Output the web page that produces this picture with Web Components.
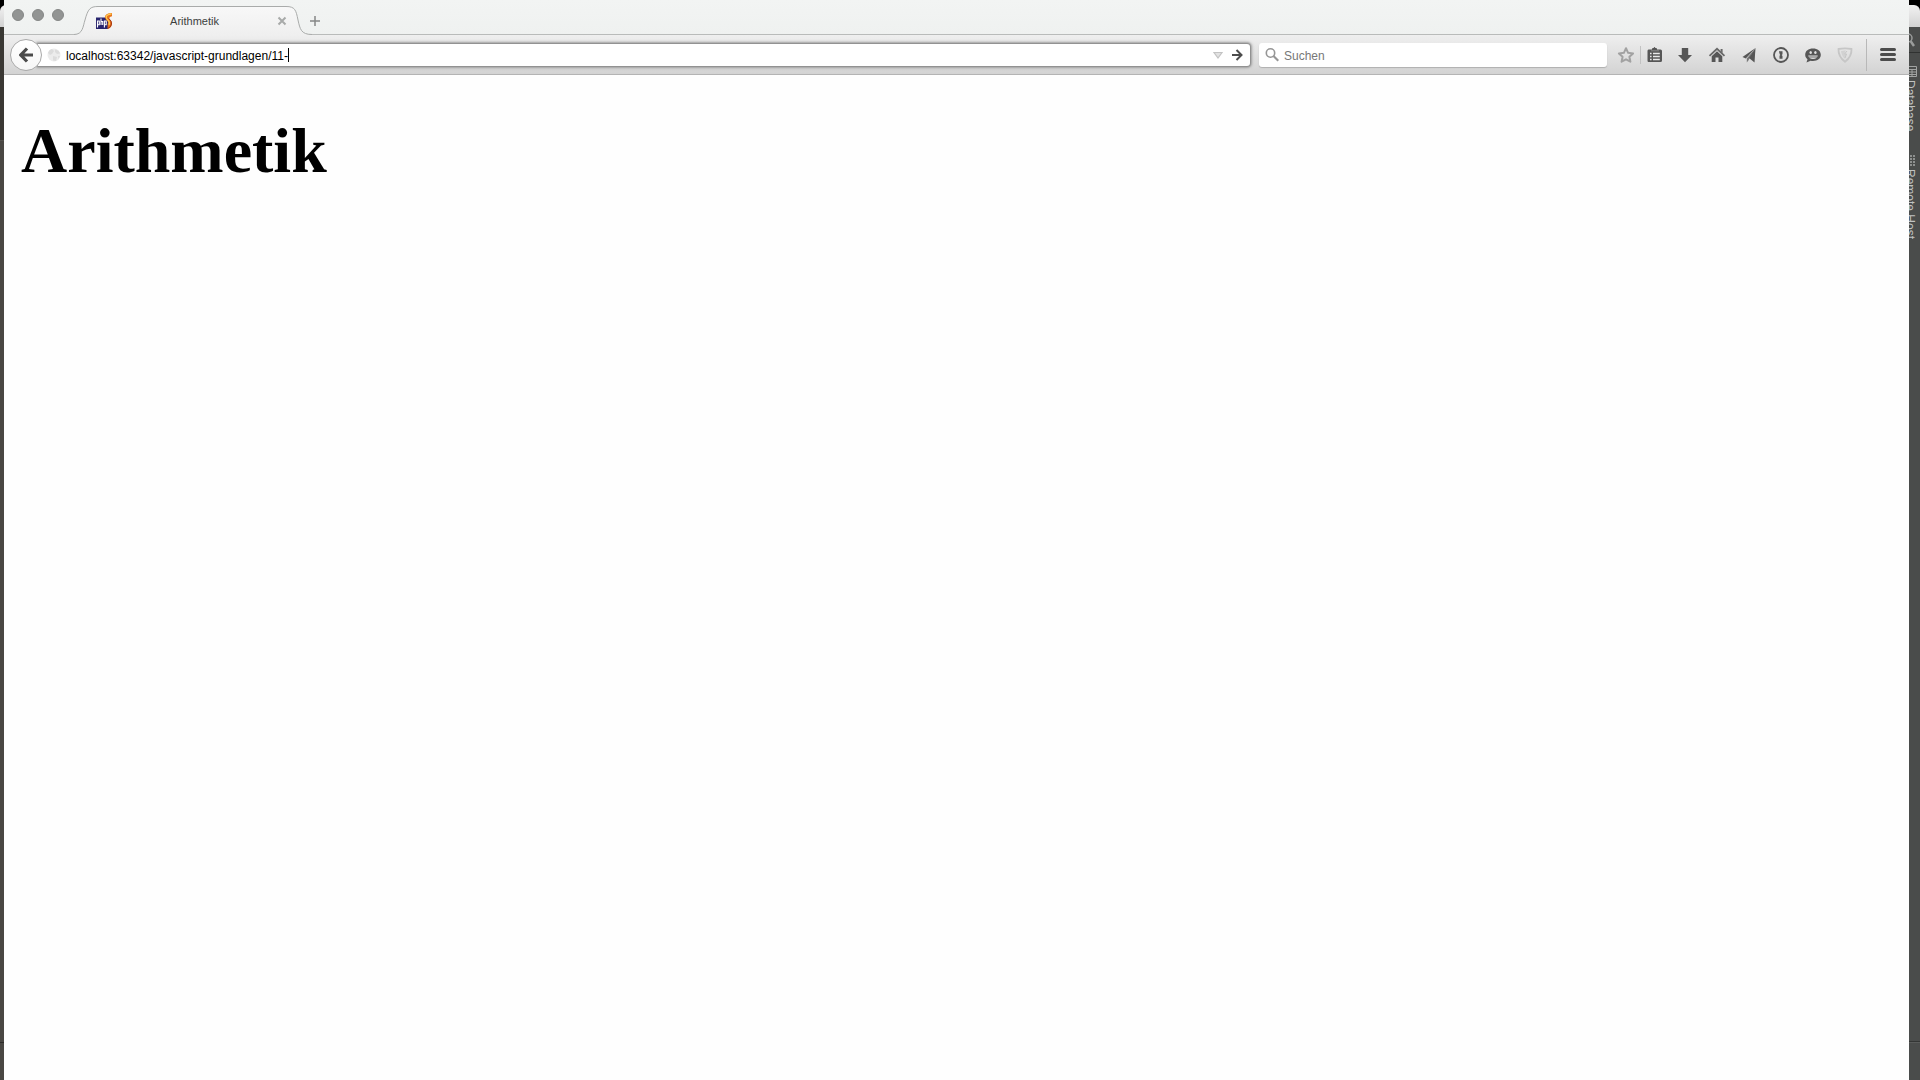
<!DOCTYPE html>
<html lang="de">
<head>
<meta charset="utf-8">
<title>Arithmetik</title>
<style>
  html, body { margin: 0; }
  body { font-family: "Liberation Sans", Arial, sans-serif; font-size: 12px; background: #000; }
</style>
</head>
<body>
<desk-top>
  <ide-backdrop slot="behind">
    <tool-window-tab icon="database">Database</tool-window-tab>
    <tool-window-tab icon="remote">Remote Host</tool-window-tab>
  </ide-backdrop>
  <browser-window>
    <tab-strip slot="tabs">
      <browser-tab>Arithmetik</browser-tab>
    </tab-strip>
    <nav-toolbar slot="toolbar">
      <url-bar value="localhost:63342/javascript-grundlagen/11-"></url-bar>
      <search-bar placeholder="Suchen"></search-bar>
      <tool-button slot="star" icon="star" label="Lesezeichen"></tool-button>
      <tool-button slot="list" icon="clipboard" label="Lesezeichenliste"></tool-button>
      <tool-button slot="tools" icon="download" label="Downloads"></tool-button>
      <tool-button slot="tools" icon="home" label="Startseite"></tool-button>
      <tool-button slot="tools" icon="plane" label="Seite teilen"></tool-button>
      <tool-button slot="tools" icon="one" label="Passwörter"></tool-button>
      <tool-button slot="tools" icon="smile" label="Chat"></tool-button>
      <tool-button slot="tools" icon="shield" label="Schutz"></tool-button>
      <tool-button slot="menu" icon="menu" label="Menü"></tool-button>
    </nav-toolbar>
    <page-view><span>Arithmetik</span></page-view>
  </browser-window>
</desk-top>

<script>
const ICONS = {
  star: '<path d="M10 3.200l2.100 4.600 5 .6-3.700 3.400 1 4.900L10 14.300l-4.400 2.400 1-4.900-3.700-3.400 5-.6z" fill="none" stroke="#a2a2a2" stroke-width="2" stroke-linejoin="round"/>',
  clipboard: '<path d="M3.500 4.500H7V4q0-1 1-1h.6q.9-2 1.800 0h.6q1 0 1 1v.5h3.500Q17 4.500 17 6v9.500q0 1.500-1.500 1.500h-12Q2.500 17 2.500 15.500V6Q2.500 4.500 3.500 4.500z" fill="#565656"/><path d="M5 8.500h1.600M8 8.500h6.800M5 11.500h1.600M8 11.500h6.800M5 14.500h1.600M8 14.500h6.800" stroke="#e9e9e9" stroke-width="1.600"/><path d="M6 5.800h8" stroke="#888"/>',
  download: '<path d="M6.800 3h6.400v7h3.800L10 17.300 3 10h3.800z" fill="#565656"/>',
  home: '<path d="M2.500 10.800L10 3.800l7.500 7" fill="none" stroke="#686868" stroke-width="1.800"/><path d="M13.600 4h2v4l-2-1.800z" fill="#686868"/><path d="M4.700 11.200L10 6.300l5.300 4.900V17H11.500v-4.500h-3V17H4.700z" fill="#565656"/>',
  plane: '<path d="M16.500 3L3.500 12l3.300 1.600z" fill="#565656"/><path d="M16.500 3L7.800 13.500V17.500l1.700-2.300z" fill="#777"/><path d="M16.500 3L10 13l5.500 4.500z" fill="#565656"/>',
  one: '<circle cx="10" cy="10" r="7" fill="none" stroke="#565656" stroke-width="1.800"/><path d="M8 6.200h3.500v3l-.8.800.8.900v2.900H8.500v-3l.8-.8-.8-.9V7.500H8z" fill="#565656"/>',
  smile: '<path d="M10 3.500c4.500 0 7.800 2.400 7.800 6.300S14.500 16 10 16c-.8 0-1.600-.1-2.400-.3L3.500 17.500l1-3.200C3 13.200 2.200 11.800 2.200 9.800 2.200 5.900 5.500 3.500 10 3.500z" fill="#565656"/><ellipse cx="7.700" cy="7.500" rx="1.200" ry="1.500" fill="#dedede"/><ellipse cx="12.400" cy="7.500" rx="1.200" ry="1.500" fill="#dedede"/><path d="M5.200 10.500h9.600q-1 3.600-4.800 3.600t-4.800-3.600z" fill="#dedede"/><path d="M6 12h8" stroke="#565656" stroke-width=".8"/>',
  shield: '<path d="M3.500 4Q10 2.600 16.500 4q.4 7.500-6.500 12.800Q3.100 11.500 3.500 4z" fill="none" stroke="#c6c6c6" stroke-width="1.800"/><path d="M6 6q3-.8 5-.5L9 9l2 .3-1 4.500Q6.500 11 6 6z" fill="#d2d2d2"/><path d="M12 6l-2.500 3h2L10 13" fill="none" stroke="#c6c6c6"/>',
  menu: '<path d="M3.500 4.500h13M3.500 9.500h13M3.500 14.500h13" stroke="#4c4c4c" stroke-width="3" stroke-linecap="round"/>'
};

function define(name, html, setup) {
  const template = document.createElement('template');
  template.innerHTML = html;
  customElements.define(name, class extends HTMLElement {
    constructor() {
      super();
      this.attachShadow({ mode: 'open' }).append(template.content.cloneNode(true));
    }
    connectedCallback() { if (setup) setup(this, this.shadowRoot); }
  });
}

define('desk-top', `
  <style>
    :host { display: flex; min-height: 100vh; position: relative; isolation: isolate; }
    ::slotted(browser-window) { flex: 1; margin: 0 11px 0 4px; }
  </style>
  <slot name="behind"></slot><slot></slot>`);

/* Editor window that peeks out on both sides of the browser. */
define('ide-backdrop', `
  <style>
    :host { position: absolute; inset: 0; z-index: -1; display: flex; flex-direction: column; padding-top: 5px; box-sizing: border-box; }
    .title { height: 22px; border-radius: 6px 6px 0 0; background: linear-gradient(#f2f2f2, #d2d2d2); }
    .main { flex: 1; display: flex; justify-content: space-between; }
    .left { width: 4px; display: flex; flex-direction: column; background: #494743; }
    .left i { height: 113px; border-bottom: 1px solid #55534f; background: #3a3834; }
    .left b { margin-top: auto; height: 37px; border-top: 1px solid #2c2b29; }
    .right { width: 20px; display: flex; flex-direction: column; align-items: center; background: #4a4c4b; color: #c0c2c1; }
    .find { align-self: stretch; height: 26px; border-bottom: 1px solid #303231; display: flex; justify-content: flex-end; align-items: center; padding-right: 5px; box-sizing: border-box; }
    .tabs { display: flex; flex-direction: column; gap: 23px; padding: 12px 0; }
    .status { align-self: stretch; margin-top: auto; height: 38px; border-top: 1px solid #343635; box-shadow: inset 0 1px #5a5c5b; }
  </style>
  <div class="title"></div>
  <div class="main">
    <div class="left"><i></i><b></b></div>
    <div class="right">
      <div class="find"><svg width="14" height="14" viewBox="0 0 14 14" fill="none" stroke="#9a9c9b"><circle cx="7" cy="5" r="4" stroke-width="1.500"/><path d="M9.500 8l3.500 5" stroke-width="2.500"/></svg></div>
      <div class="tabs"><slot></slot></div>
      <div class="status"></div>
    </div>
  </div>`);

define('tool-window-tab', `
  <style>
    :host { display: flex; flex-direction: column; align-items: center; gap: 2px; }
    span { writing-mode: vertical-rl; line-height: 14px; white-space: nowrap; }
    svg { display: block; }
  </style>
  <svg width="14" height="13" viewBox="2 0 14 13"></svg>
  <span><slot></slot></span>`, (el, root) => {
  root.querySelector('svg').innerHTML = el.getAttribute('icon') === 'database'
    ? '<path d="M2.500 1.500h13v10h-13zM2.500 4.500h13M2.500 7h13M2.500 9.500h13M7 4v8M11 4v8" fill="none" stroke="#a2a4a3"/>'
    : '<path d="M3 2h11M3 5h11M3 8h11M3 11h11" stroke="#8e908f" stroke-width="2" stroke-dasharray="2 1"/>';
});

define('browser-window', `
  <style>
    :host { display: flex; flex-direction: column; min-width: 0; background: #fff; }
    ::slotted(page-view) { flex: 1; }
  </style>
  <slot name="tabs"></slot><slot name="toolbar"></slot><slot></slot>`);

define('tab-strip', `
  <style>
    :host { display: flex; height: 35px; box-sizing: border-box; background: linear-gradient(#f2f4f3, #eff1f0); box-shadow: inset 0 -1px #b9bbba; }
    .lights { display: flex; gap: 8px; padding: 9px 0 0 8px; width: 62px; }
    .lights button { width: 12px; height: 12px; padding: 0; border: 1px solid #858786; border-radius: 50%; background: #929493; }
    .add { align-self: center; margin: 7px 0 0 -7px; width: 20px; height: 20px; padding: 0; border: 0; background: none; display: flex; align-items: center; justify-content: center; }
  </style>
  <div class="lights"><button aria-label="Schließen"></button><button aria-label="Minimieren"></button><button aria-label="Maximieren"></button></div>
  <slot></slot>
  <button class="add" aria-label="Neuer Tab"><svg width="12" height="12" viewBox="0 0 12 12"><path d="M6 1v10M1 6h10" stroke="#858786" stroke-width="1.500"/></svg></button>`);

define('browser-tab', `
  <style>
    :host { position: relative; display: flex; align-items: center; width: 238px; height: 29px; margin-top: 6px; padding: 0 25px 0 22px; box-sizing: border-box; font-size: 11px; color: #3c3e3d; isolation: isolate; }
    .shape { position: absolute; inset: 0; z-index: -1; }
    span { flex: 1; text-align: center; line-height: 16px; }
    button { padding: 0; border: 0; background: none; width: 10px; height: 10px; display: flex; }
  </style>
  <svg class="shape" width="238" height="29" viewBox="0 0 238 29">
    <defs><linearGradient id="g" x2="0" y2="1"><stop stop-color="#f8f8f8"/><stop offset="1" stop-color="#efefef"/></linearGradient></defs>
    <path d="M0 29V28.500C9 28.500 9 20 11 14 14 3 16 .5 24 .5H212C221 .5 222 4 224 14 226 23 227 28.500 238 28.500V29z" fill="url(#g)"/>
    <path d="M0 28.500C9 28.500 9 20 11 14 14 3 16 .5 24 .5H212C221 .5 222 4 224 14 226 23 227 28.500 238 28.500" fill="none" stroke="#a9abaa"/>
  </svg>
  <svg width="16" height="16" viewBox="0 0 16 16">
    <path d="M0 4.500h12V16H0z" fill="#28246e"/>
    <path d="M1.500 14.500V8h1.800v3.800H1.500M5 5.500v6.500M5 8.500h1.700V12M8.400 14.500V8h1.800v3.800H8.400" fill="none" stroke="#fff" stroke-width="1.100"/>
    <path d="M16 .1Q8.800.3 9 4.300q0 2 2.400 3.800 1.300 1.300.2 3V16q4.400-1.200 4.400-5.600 0-1.900-2.300-4Q12.300 4.200 16 3.200z" fill="#e8741c"/>
    <path d="M15.500.8Q10 1.500 10.200 4.200q.2 1.600 2 3.200 1.900 1.800.8 4.600" fill="none" stroke="#ffce54" stroke-width="1.200"/>
    <path d="M12.800 5.500q3.200 2.500 2.700 5.500-.5 3.500-4 4.500" fill="none" stroke="#9c2d12" stroke-width=".9"/>
  </svg>
  <span><slot></slot></span>
  <button aria-label="Tab schließen"><svg width="10" height="10" viewBox="0 0 10 10"><path d="M1.500 1.500l7 7M8.500 1.500l-7 7" stroke="#a8aaa9" stroke-width="2"/></svg></button>`);

define('nav-toolbar', `
  <style>
    :host { display: flex; align-items: center; height: 40px; box-sizing: border-box; padding-left: 6px; background: linear-gradient(#efefef, #d3d3d3); border-bottom: 1px solid #b4b4b4; }
    .back { position: relative; z-index: 1; flex: none; width: 32px; height: 32px; margin-right: -4px; padding: 0; border: 1px solid #a9a9a9; border-radius: 50%; background: linear-gradient(#fff, #f6f6f6); display: flex; align-items: center; justify-content: center; }
    .bars { flex: 1; display: flex; align-items: center; gap: 9px; min-width: 0; }
    .line { width: 1px; height: 18px; background: #c2c2c2; }
    .line.tall { height: 32px; margin-left: 5px; background: #b8b8b8; }
    ::slotted(url-bar) { flex: 1; }
    ::slotted(search-bar) { flex: 0 1 348px; }
    ::slotted([slot=star]) { width: 28px; margin-left: 5px; }
    ::slotted([slot=list]) { width: 28px; }
    ::slotted([slot=tools]) { width: 32px; }
    ::slotted([slot=menu]) { width: 42px; }
  </style>
  <button class="back" aria-label="Zurück"><svg width="14" height="16" viewBox="0 0 14 16"><path d="M8 1.500L1.800 8 8 14.500M2 8h12" fill="none" stroke="#4a4a4a" stroke-width="3.200"/></svg></button>
  <div class="bars"><slot></slot></div>
  <slot name="star"></slot><div class="line"></div><slot name="list"></slot>
  <slot name="tools"></slot><div class="line tall"></div><slot name="menu"></slot>`);

define('url-bar', `
  <style>
    :host { display: flex; align-items: center; height: 22px; padding: 0 4px 0 9px; box-sizing: border-box; border-radius: 0 3px 3px 0; background: #fff; box-shadow: 0 0 2px 1px #858585, 0 0 3px 2px #b0b0b0; min-width: 0; }
    label { flex: 1; display: flex; align-items: center; min-width: 0; }
    .globe { flex: none; margin-right: 5px; }
    input { field-sizing: content; min-width: 0; height: 18px; padding: 2px 0 0; box-sizing: border-box; border: 0; outline: 0; background: none; font: inherit; color: #000; }
    .caret { width: 1px; height: 14px; background: #000; }
    button { flex: none; display: flex; align-items: center; justify-content: center; height: 20px; padding: 0; border: 0; background: none; width: 19px; }
  </style>
  <label>
    <svg class="globe" width="14" height="14" viewBox="0 0 14 14"><circle cx="7" cy="7" r="6.500" fill="#ececec"/><path d="M1 5q1-3.500 4-4l2 2-2 3-2 1zM8 1.500q4 .5 5 4L10 6 8 4zM6 8l4 1-1 4-3-.5zM11 8h2l-1.500 3z" fill="#dcdcdc"/></svg>
    <input type="text" aria-label="Adresse"><i class="caret"></i>
  </label>
  <button aria-label="Verlauf"><svg width="10" height="8" viewBox="0 0 10 8"><path d="M1 1.500h8L5 7z" fill="#e2e2e2" stroke="#c3c3c3" stroke-width="1.200"/></svg></button>
  <button aria-label="Laden"><svg width="12" height="12" viewBox="0 0 12 12"><path d="M5.500 1l5 5-5 5M1 6h9" fill="none" stroke="#4c4c4c" stroke-width="2"/></svg></button>`,
  (el, root) => { root.querySelector('input').value = el.getAttribute('value'); });

define('search-bar', `
  <style>
    :host { display: flex; height: 24px; border-radius: 3px; background: #fff; box-shadow: 0 1px 1px #b0b0b0; min-width: 0; }
    label { flex: 1; display: flex; align-items: center; gap: 5px; padding: 0 6px; min-width: 0; }
    svg { flex: none; }
    input { flex: 1; min-width: 0; height: 18px; padding: 2px 0 0; box-sizing: border-box; border: 0; outline: 0; background: none; font: inherit; }
    input::placeholder { color: #777; opacity: 1; }
  </style>
  <label>
    <svg width="14" height="14" viewBox="0 0 14 14" fill="none" stroke="#969696"><circle cx="5.500" cy="5" r="4.200" stroke-width="1.600"/><path d="M8.500 8l4.800 4.800" stroke-width="2.200"/></svg>
    <input type="text" aria-label="Suche">
  </label>`,
  (el, root) => { root.querySelector('input').placeholder = el.getAttribute('placeholder'); });

define('tool-button', `
  <style>
    :host { display: flex; flex: none; justify-content: center; }
    button { display: flex; padding: 0; border: 0; background: none; }
  </style>
  <button><svg width="20" height="20" viewBox="0 0 20 20"></svg></button>`, (el, root) => {
  root.querySelector('button').setAttribute('aria-label', el.getAttribute('label'));
  root.querySelector('svg').innerHTML = ICONS[el.getAttribute('icon')];
});

define('page-view', `
  <style>
    :host { display: block; padding: 39px 17px; background: #fefefe; color: #000; }
    h1 { margin: 0; font: bold 64px/74px "Liberation Serif", "Times New Roman", serif; }
  </style>
  <h1><slot></slot></h1>`);
</script>
</body>
</html>
